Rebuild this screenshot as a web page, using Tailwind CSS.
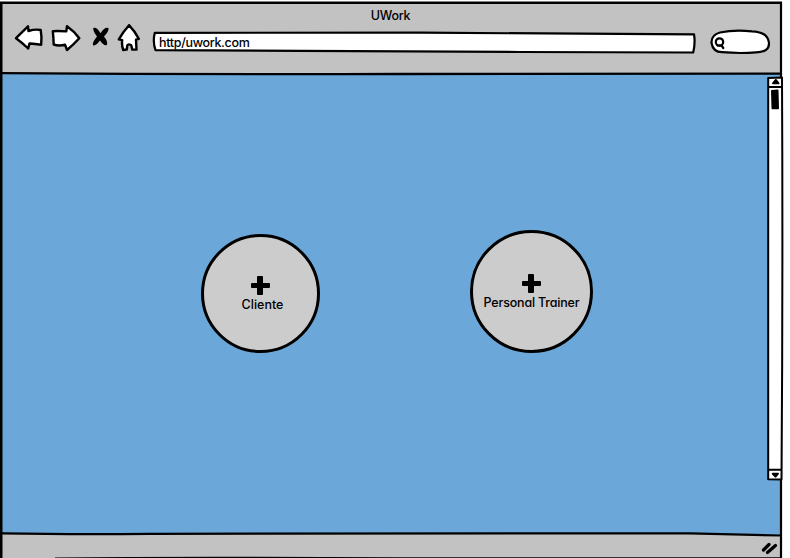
<!DOCTYPE html>
<html lang="en">
<head>
<meta charset="utf-8">
<title>UWork</title>
<script src="https://cdn.jsdelivr.net/npm/@tailwindcss/browser@4"></script>
</head>
<body class="bg-white overflow-hidden">
<div class="relative w-[790px] h-[558px] overflow-hidden pt-[2px] text-[12.5px] font-medium leading-4 text-black font-['Inter','Liberation_Sans',sans-serif] [font-feature-settings:'cv11']">
  <div class="flex flex-col w-[781px] h-[556px]">
    <header class="h-[72px] bg-[#c2c2c2] flex flex-col">
      <h1 class="h-[22px] pt-[6px] text-center"><span class="tracking-[-0.2px]">UWork</span></h1>
      <nav class="flex h-[34px]">
        <svg class="w-[150px] h-[34px] shrink-0" viewBox="0 24 150 34" fill="white" stroke="black" stroke-width="2.4" stroke-linejoin="round" stroke-linecap="round">
          <path d="M16 38.2 28 26.3 28.5 31 Q35 29 40.7 30 Q42 37 41.2 44.700 Q35 44 29.500 43.500 L28.200 48.500 Q22 42.500 16 38.200Z"/>
          <path d="M52.800 31.200 Q59 30.800 66.300 31.400 L67 26.200 Q74 31 79.300 38.200 Q73.500 44.500 67 50 L65 44.600 Q59 46.300 53.700 44.500 Q53.500 38 52.800 31.200Z"/>
          <path d="M93.300 28 Q96.500 26.500 100.500 33.200 Q105 26.500 108.500 28 Q109.200 31 104 36.500 Q108.500 42 106.800 45 Q104 46.300 100 40.500 Q95.500 46.500 93 45.200 Q92 42.500 97 36.500 Q92.800 31 93.300 28Z" fill="black" stroke="none"/>
          <path d="M129 25.200 Q135 31.500 138.800 38.800 L136 39.700 136.500 49.600 132.300 49.600 131.200 45.200 Q128.500 43.500 127.300 45.300 L126.800 49.500 123.200 50 Q121.500 45 122.200 40.200 L118.800 39.300 Q123 32 129 25.200Z"/>
        </svg>
        <div class="relative w-[548px] h-[34px] shrink-0">
          <svg class="absolute inset-0 w-[548px] h-[34px]" viewBox="150 24 548 34" fill="white" stroke="black" stroke-width="2.200" stroke-linejoin="round"><path d="M154.800 32.800 L420 32.700 Q560 33 694 34.300 Q695.500 43 693.200 52.500 L520 52 Q400 51 300 50.800 L155.500 50.200 Q152.500 42 154.800 32.800Z"/></svg>
          <span class="relative block pt-[11px] pl-[9px]"><span class="tracking-[-0.32px]">http/uwork.com</span></span>
        </div>
        <svg class="w-[83px] h-[34px] shrink-0" viewBox="698 24 83 34" fill="white" stroke="black" stroke-width="2.200" stroke-linejoin="round" stroke-linecap="round">
          <path d="M711.500 43 Q711 35 720 32.500 Q734 29.500 752 31.300 Q768 32 769 43 Q769.500 52 756 52.300 Q741 53.700 722 52.200 Q713 52 711.500 43Z"/>
          <circle cx="719.500" cy="42" r="3.700"/><path d="M717.500 45.500 H722 M721.500 45.500 L723.300 48"/>
        </svg>
      </nav>
    </header>
    <main class="flex items-start h-[460px] bg-[#6ba7d8]">
      <button class="ml-[201px] mt-[160px] w-[119px] h-[119px] rounded-full border-3 border-black bg-[#cccccc] flex flex-col items-center pt-[39px] shrink-0">
        <svg class="w-[21px] h-[21px] shrink-0" viewBox="0 0 21 21"><path d="M8 0H12Q13 0 13 1V7H19Q20 7 20 8V11Q20 12 19 12H13V18Q13 19 12 19H8Q7 19 7 18V12H2Q1 12 1 11V8Q1 7 2 7H7V1Q7 0 8 0Z"/></svg>
        <span class="relative left-[2px] whitespace-nowrap">Cliente</span>
      </button>
      <button class="ml-[150px] mt-[156px] w-[123px] h-[123px] rounded-full border-3 border-black bg-[#cccccc] flex flex-col items-center pt-[41px] shrink-0">
        <svg class="w-[21px] h-[21px] shrink-0" viewBox="0 0 21 21"><path d="M8 0H12Q13 0 13 1V7H19Q20 7 20 8V11Q20 12 19 12H13V18Q13 19 12 19H8Q7 19 7 18V12H2Q1 12 1 11V8Q1 7 2 7H7V1Q7 0 8 0Z"/></svg>
        <span class="whitespace-nowrap tracking-[-0.180px]">Personal Trainer</span>
      </button>
    </main>
    <footer class="h-[24px] bg-[#c2c2c2]"></footer>
  </div>
  <!-- Sketched window frame, scrollbar and resize grip -->
  <svg class="absolute inset-0 w-[790px] h-[558px] pointer-events-none" viewBox="0 0 790 558" fill="none" stroke="black">
    <path d="M690 532 L781 532 781 535 Q735 534.500 690 533.500Z" fill="#6ba7d8" stroke="none"/>
    <path d="M0 2.800 H782" stroke-width="2.400"/>
    <path d="M1.200 2 V558" stroke-width="2.600"/>
    <path d="M781 2 Q781.800 200 781 558" stroke-width="2.200"/>
    <path d="M2 73.200 Q200 74.600 400 74 Q600 73 781 73.700" stroke-width="2.300"/>
    <path d="M2 533.300 Q70 534.500 150 533.800 Q400 533 690 533.300 L781 535.500" stroke-width="2.200"/>
    <path d="M55 558.200 Q180 556.800 400 558 L781 558" stroke-width="1.400"/>
    <g stroke-width="2" stroke-linejoin="round">
      <path d="M768.200 78 L782 77.500 Q783 280 781.500 479.500 L768.200 479.300 Q769 280 768.200 78Z" fill="white"/>
      <path d="M768 87 H782M768 469.700 H782"/>
      <path d="M773 83.300 L775.800 80 778.500 83.300Z" fill="black"/>
      <path d="M772.800 473.700 L778 473.700 775.500 476.500Z" fill="black"/>
      <path d="M772 91 L777.500 90.500 778 108.300 772.500 108.300Z" fill="black"/>
    </g>
    <path d="M763.500 550 L769 544.500M767.500 552.500 L775.500 545.500" stroke-width="3.200" stroke-linecap="round"/>
  </svg>
</div>
</body>
</html>
